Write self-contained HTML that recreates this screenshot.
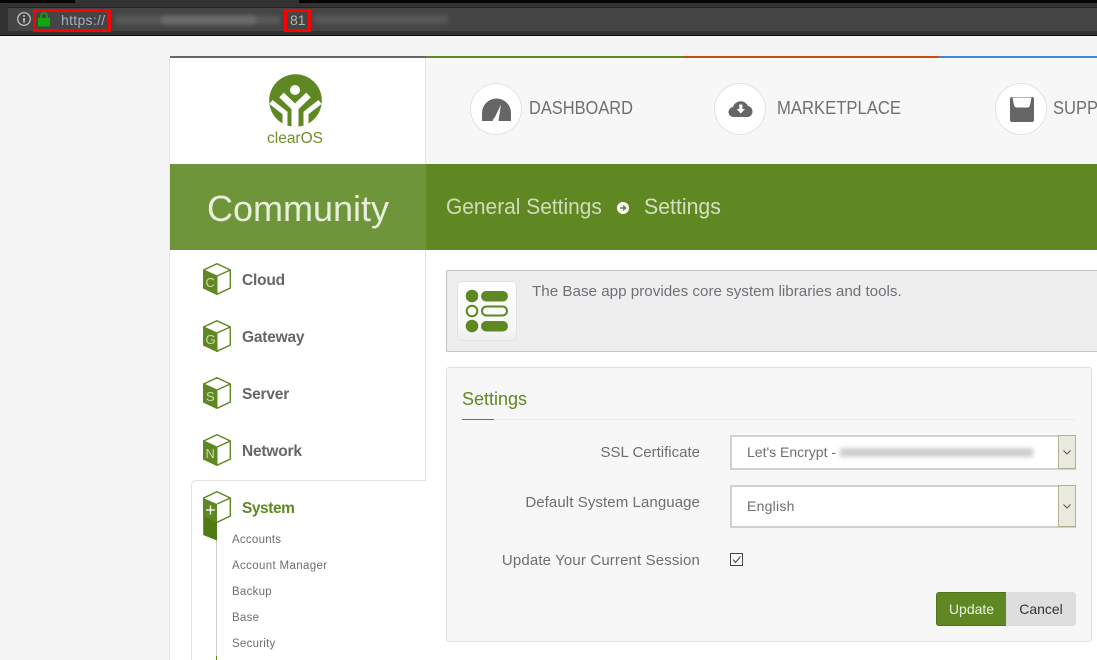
<!DOCTYPE html>
<html><head><meta charset="utf-8"><title>ClearOS Settings</title>
<style>
html,body{margin:0;padding:0;width:1097px;height:660px;overflow:hidden;background:#f4f4f4;font-family:"Liberation Sans",sans-serif}
.a{position:absolute;white-space:nowrap}
#v{position:relative;width:1097px;height:660px;overflow:hidden}
.nav{font-size:18px;color:#707070;top:97px;line-height:22px;transform-origin:0 50%}
.circ{width:52px;height:52px;border:1px solid #e2e2e2;border-radius:50%;background:#fff;top:83px;box-sizing:border-box}
.m{font-size:15.5px;font-weight:bold;color:#666;left:242px;letter-spacing:-.2px;line-height:20px}
.s{font-size:11.5px;color:#6e6e6e;left:232px;line-height:14px;letter-spacing:.25px}
.l{font-size:15px;color:#6e6e6e;text-align:right;right:397px;line-height:18px}
.sel{left:730px;width:346px;background:#fff;border:2px solid #d0d0d0;box-sizing:border-box}
.arr{left:1058px;width:18px;background:#e9e9dd;border:1px solid #b0b490;box-sizing:border-box}
.b{filter:blur(2.2px)}
.t{font-size:13px;fill:#cbd9ae;font-family:"Liberation Sans",sans-serif}
</style></head><body><div id="v">

<div class="a" style="left:0;top:0;width:1097px;height:36px;background:#323232"></div>
<div class="a" style="left:0;top:0;width:75px;height:3px;background:#060606"></div>
<div class="a" style="left:299px;top:0;width:798px;height:3px;background:#060606"></div>
<div class="a" style="left:0;top:35px;width:1097px;height:1px;background:#0a0a0a"></div>
<div class="a" style="left:8px;top:7px;width:1089px;height:24px;background:#454545;border-top:1px solid #222;box-sizing:border-box"></div>
<svg class="a" style="left:16px;top:11px" width="16" height="16" viewBox="0 0 16 16"><circle cx="8" cy="8" r="6.300" fill="none" stroke="#c9c9c9" stroke-width="1.200"/><rect x="7.200" y="7" width="1.600" height="4.600" fill="#c9c9c9"/><rect x="7.200" y="4.200" width="1.600" height="1.600" fill="#c9c9c9"/></svg>
<div class="a" style="left:33px;top:9px;width:78px;height:23px;border:3px solid #f00;box-sizing:border-box"></div>
<div class="a" style="left:284px;top:9px;width:27px;height:23px;border:3px solid #f00;box-sizing:border-box"></div>
<svg class="a" style="left:37px;top:12px" width="14" height="15" viewBox="0 0 14 15"><rect x="1" y="6" width="12" height="8.500" fill="#0fa80f"/><path d="M3.800 6.500V4.200a3.200 3.200 0 0 1 6.400 0v2.300" fill="none" stroke="#0fa80f" stroke-width="1.600"/></svg>
<div class="a" style="left:61px;top:12px;font-size:14px;line-height:17px;color:#a3afc0;letter-spacing:.3px">https://</div>
<div class="a" style="left:290px;top:12px;font-size:14px;line-height:17px;color:#b4b4b4">81</div>
<div class="a b" style="left:115px;top:16px;width:165px;height:8px;background:#5a5a5a"></div>
<div class="a b" style="left:162px;top:16px;width:94px;height:8px;background:#6c6c6c"></div>
<div class="a b" style="left:314px;top:15px;width:134px;height:9px;background:#585858"></div>

<div class="a" style="left:170px;top:58px;width:927px;height:602px;background:#fff"></div>
<div class="a" style="left:426px;top:58px;width:671px;height:106px;background:#f7f7f7"></div>
<div class="a" style="left:170px;top:56px;width:256px;height:2px;background:#666"></div>
<div class="a" style="left:426px;top:56px;width:257px;height:2px;background:#5f8722"></div>
<div class="a" style="left:683px;top:56px;width:256px;height:2px;background:#c2510f"></div>
<div class="a" style="left:939px;top:56px;width:158px;height:2px;background:#3f87cf"></div>
<div class="a" style="left:169px;top:58px;width:1px;height:602px;background:#e8e8e8"></div>
<div class="a" style="left:425px;top:58px;width:1px;height:106px;background:#e4e4e4"></div>

<svg class="a" style="left:269px;top:74px" width="53" height="53" viewBox="0 0 53 53">
<defs><clipPath id="lc"><circle cx="26.500" cy="26.500" r="26.300"/></clipPath></defs>
<circle cx="26.500" cy="26.500" r="26.300" fill="#5f8722"/>
<g clip-path="url(#lc)">
<circle cx="26" cy="16" r="5" fill="#fff"/>
<path d="M12.500 21L26 34 39.500 21" fill="none" stroke="#fff" stroke-width="6.500"/>
<path d="M26 33V54" stroke="#fff" stroke-width="7"/>
<path d="M2 28L16 39V54" fill="none" stroke="#fff" stroke-width="5"/>
<path d="M51 28L37 39V54" fill="none" stroke="#fff" stroke-width="5"/>
</g></svg>
<div class="a" style="left:267px;top:130px;font-size:15.500px;line-height:18px;color:#6f8f2c">clearOS</div>

<div class="a circ" style="left:470px"></div>
<svg class="a" style="left:480px;top:96px" width="32" height="28" viewBox="0 0 32 28"><path d="M2 25V17A14 14 0 0 1 31 17V25Z" fill="#666"/><path d="M21 8.500L14.500 22a2.200 2.200 0 0 0 1.500 4.500h1.500a2 2 0 0 0 1-1.500Z" fill="#fff"/></svg>
<div class="a nav" style="left:529px;transform:scaleX(.912)">DASHBOARD</div>
<div class="a circ" style="left:714px"></div>
<svg class="a" style="left:728px;top:98px" width="26" height="22" viewBox="0 0 26 22"><path d="M6 19a5 5 0 0 1-1-10 8 8 0 0 1 15-1 5.600 5.600 0 0 1 0 11Z" fill="#666"/><path d="M11.200 6.500h3.200v4.500h2.600L12.800 15.500 8.600 11h2.600Z" fill="#fff"/></svg>
<div class="a nav" style="left:777px;transform:scaleX(.925)">MARKETPLACE</div>
<div class="a circ" style="left:995px"></div>
<svg class="a" style="left:1009px;top:96px" width="26" height="27" viewBox="0 0 26 27"><path d="M1 3a2 2 0 0 1 2-2H23a2 2 0 0 1 2 2V24a2 2 0 0 1-2 2H3a2 2 0 0 1-2-2Z" fill="#666"/><path d="M3.500 1.500H22.500L21 9a3 3 0 0 1-3 2.500H8A3 3 0 0 1 5 9Z" fill="#fff"/></svg>
<div class="a nav" style="left:1053px;transform:scaleX(.92)">SUPPORT</div>

<div class="a" style="left:170px;top:164px;width:927px;height:86px;background:#5f8722"></div>
<div class="a" style="left:170px;top:164px;width:256px;height:86px;background:#6f953a"></div>
<div class="a" style="left:207px;top:187px;font-size:36px;line-height:44px;color:#e9efdd">Community</div>
<div class="a" style="left:446px;top:193px;font-size:22.500px;line-height:27px;color:#d0ddba;transform:scaleX(.93);transform-origin:0 50%">General Settings</div>
<svg class="a" style="left:617px;top:202px" width="12" height="12" viewBox="0 0 12 12"><circle cx="6" cy="6" r="6" fill="#fff"/><path d="M3 6H8M6 3.500L8.500 6 6 8.500" stroke="#5f8722" stroke-width="1.500" fill="none"/></svg>
<div class="a" style="left:644px;top:193px;font-size:22.500px;line-height:27px;color:#d5e0c2;transform:scaleX(.946);transform-origin:0 50%">Settings</div>

<div class="a" style="left:425px;top:250px;width:1px;height:230px;background:#e2e2e2"></div>
<div class="a" style="left:191px;top:480px;width:235px;height:180px;border:1px solid #e2e2e2;border-right:0;border-bottom:0;border-radius:5px 0 0 0;box-sizing:border-box;background:#fff"></div>

<svg class="a" style="left:203px;top:263px" width="28" height="32" viewBox="0 0 28 32"><polygon points="14,.7 27.300,7 27.300,25 14,31.300 .7,25 .7,7" fill="#fff" stroke="#5f8722" stroke-width="1.400"/><polygon points=".7,7 14,13 14,31.300 .7,25" fill="#5f8722" stroke="#5f8722" stroke-width="1"/><line x1="14" y1="13" x2="27.300" y2="7" stroke="#5f8722" stroke-width="1.400"/><text class="t" x="2.500" y="24">C</text></svg>
<div class="a m" style="top:271px">Cloud</div>
<svg class="a" style="left:203px;top:320px" width="28" height="32" viewBox="0 0 28 32"><polygon points="14,.7 27.300,7 27.300,25 14,31.300 .7,25 .7,7" fill="#fff" stroke="#5f8722" stroke-width="1.400"/><polygon points=".7,7 14,13 14,31.300 .7,25" fill="#5f8722" stroke="#5f8722" stroke-width="1"/><line x1="14" y1="13" x2="27.300" y2="7" stroke="#5f8722" stroke-width="1.400"/><text class="t" x="2.500" y="24">G</text></svg>
<div class="a m" style="top:328px">Gateway</div>
<svg class="a" style="left:203px;top:377px" width="28" height="32" viewBox="0 0 28 32"><polygon points="14,.7 27.300,7 27.300,25 14,31.300 .7,25 .7,7" fill="#fff" stroke="#5f8722" stroke-width="1.400"/><polygon points=".7,7 14,13 14,31.300 .7,25" fill="#5f8722" stroke="#5f8722" stroke-width="1"/><line x1="14" y1="13" x2="27.300" y2="7" stroke="#5f8722" stroke-width="1.400"/><text class="t" x="3" y="24">S</text></svg>
<div class="a m" style="top:385px">Server</div>
<svg class="a" style="left:203px;top:434px" width="28" height="32" viewBox="0 0 28 32"><polygon points="14,.7 27.300,7 27.300,25 14,31.300 .7,25 .7,7" fill="#fff" stroke="#5f8722" stroke-width="1.400"/><polygon points=".7,7 14,13 14,31.300 .7,25" fill="#5f8722" stroke="#5f8722" stroke-width="1"/><line x1="14" y1="13" x2="27.300" y2="7" stroke="#5f8722" stroke-width="1.400"/><text class="t" x="2.500" y="24">N</text></svg>
<div class="a m" style="top:442px">Network</div>

<div class="a" style="left:216px;top:540px;width:1px;height:116px;background:#cfcfcf"></div>
<div class="a" style="left:216px;top:656px;width:1px;height:4px;background:#5f8722"></div>
<svg class="a" style="left:203px;top:491px" width="28" height="50" viewBox="0 0 28 50"><polygon points="14,.7 27.300,7 27.300,25 14,31.300 .7,25 .7,7" fill="#fff" stroke="#5f8722" stroke-width="1.400"/><polygon points=".3,7 14,13 14,49.500 .3,44" fill="#5f8722"/><polygon points=".3,25 14,31 14,49.500 .3,44" fill="#527a14"/><line x1="14" y1="13" x2="27.300" y2="7" stroke="#5f8722" stroke-width="1.400"/><path d="M3 19H12M7.500 14.500V23.500" stroke="#fff" stroke-width="1.300"/></svg>
<div class="a m" style="top:499px;color:#5f8722;left:242px;letter-spacing:-.45px">System</div>
<div class="a s" style="top:533px">Accounts</div>
<div class="a s" style="top:559px;letter-spacing:.35px">Account Manager</div>
<div class="a s" style="top:585px">Backup</div>
<div class="a s" style="top:611px">Base</div>
<div class="a s" style="top:637px">Security</div>

<div class="a" style="left:446px;top:270px;width:651px;height:82px;background:#eee;border:1px solid #c4c4c4;border-right:0;box-sizing:border-box;border-radius:2px 0 0 2px"></div>
<div class="a" style="left:457px;top:281px;width:60px;height:60px;background:linear-gradient(#fff,#f6f6f6 80%,#eee);border:1px solid #e2e2e2;box-sizing:border-box;border-radius:5px"></div>
<svg class="a" style="left:465px;top:289px" width="44" height="44" viewBox="0 0 44 44"><circle cx="7" cy="7" r="6.300" fill="#5f8722"/><circle cx="7" cy="22" r="5.300" fill="none" stroke="#5f8722" stroke-width="2"/><circle cx="7" cy="37" r="6.300" fill="#5f8722"/><rect x="16" y="2" width="27" height="10.500" rx="5.200" fill="#5f8722"/><rect x="17" y="17.500" width="25" height="9" rx="4.500" fill="none" stroke="#5f8722" stroke-width="2"/><rect x="16" y="32" width="27" height="10.500" rx="5.200" fill="#5f8722"/></svg>
<div class="a" style="left:532px;top:283px;font-size:15.200px;line-height:18px;color:#6f6f78">The Base app provides core system libraries and tools.</div>

<div class="a" style="left:446px;top:367px;width:646px;height:275px;background:#f7f7f7;border:1px solid #e0e0e0;box-sizing:border-box;border-radius:3px"></div>
<div class="a" style="left:462px;top:388px;font-size:18px;line-height:23px;color:#5f8722">Settings</div>
<div class="a" style="left:462px;top:419px;width:614px;height:1px;background:#ececec"></div>
<div class="a" style="left:462px;top:419px;width:32px;height:1px;background:#5f8722"></div>

<div class="a l" style="top:444px">SSL Certificate</div>
<div class="a l" style="top:494px;letter-spacing:.09px">Default System Language</div>
<div class="a l" style="top:552px;letter-spacing:.14px">Update Your Current Session</div>

<div class="a sel" style="top:435px;height:35px"></div>
<div class="a" style="left:747px;top:444px;font-size:14px;line-height:17px;color:#6e6e6e">Let's Encrypt -</div>
<div class="a b" style="left:840px;top:448px;width:193px;height:9px;background:#cfcfcf"></div>
<div class="a arr" style="top:435px;height:34px"></div>
<svg class="a" style="left:1062px;top:449px" width="10" height="7" viewBox="0 0 10 7"><path d="M1.500 1.500L5 5 8.500 1.500" fill="none" stroke="#555" stroke-width="1"/></svg>
<div class="a sel" style="top:485px;height:43px"></div>
<div class="a" style="left:747px;top:498px;font-size:14px;line-height:17px;color:#6e6e6e;letter-spacing:.25px">English</div>
<div class="a arr" style="top:485px;height:42px"></div>
<svg class="a" style="left:1062px;top:503px" width="10" height="7" viewBox="0 0 10 7"><path d="M1.500 1.500L5 5 8.500 1.500" fill="none" stroke="#555" stroke-width="1"/></svg>
<svg class="a" style="left:730px;top:553px" width="14" height="14" viewBox="0 0 14 14"><rect x=".5" y=".5" width="12" height="12" fill="#fff" stroke="#444"/><path d="M3 6.500L5.500 9.500 10.500 3.500" fill="none" stroke="#444" stroke-width="1.100"/></svg>

<div class="a" style="left:936px;top:592px;width:70px;height:34px;background:#5f8722;border:1px solid #527518;border-right:0;box-sizing:border-box;border-radius:3px 0 0 3px;color:#eef3e4;font-size:14px;line-height:32px;text-align:center">Update</div>
<div class="a" style="left:1006px;top:592px;width:70px;height:34px;background:#dedede;border-radius:0 3px 3px 0;color:#333;font-size:14px;line-height:34px;text-align:center">Cancel</div>

</div></body></html>
